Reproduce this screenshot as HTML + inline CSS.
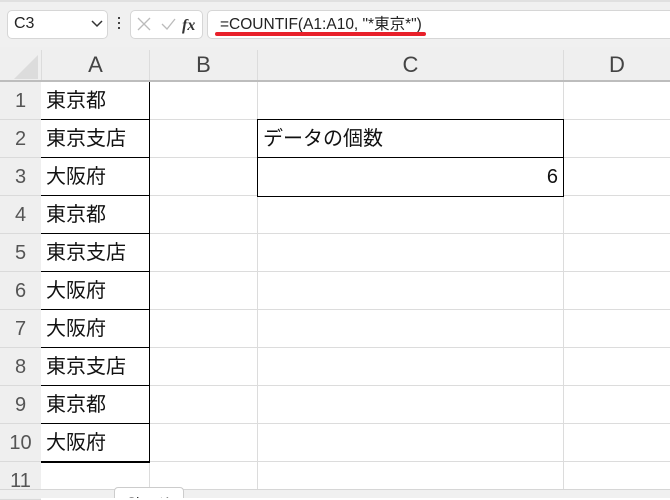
<!DOCTYPE html>
<html><head><meta charset="utf-8"><style>
*{margin:0;padding:0;box-sizing:border-box}
body{width:670px;height:498px;overflow:hidden;background:#fff;position:relative;font-family:"Liberation Sans","Noto Sans CJK JP",sans-serif}
.a{position:absolute}
.top{left:0;top:0;width:670px;height:47px;background:#f0f0f0;border-top:2px solid #e0e0e0}
.box{background:#fff;border:1px solid #d6d6d6;border-radius:5px}
.hdr{background:#efefef;color:#444;font-size:22px;text-align:center}
.rn{left:0;width:41px;height:38px;background:#efefef;color:#555;font-size:20px;text-align:center;line-height:38px;border-bottom:1px solid #dadada}
.vl{top:82px;width:1px;height:407px;background:#dcdcdc}
.hl{left:41px;width:629px;height:1px;background:#dcdcdc}
.t{font-size:20px;line-height:38px;color:#111;padding-left:5px}
</style></head><body>
<div class="a top"></div>
<div class="a box" style="left:7px;top:10px;width:101px;height:29px"></div>
<div class="a" style="left:14px;top:15px;font-size:16px;color:#222">C3</div>
<svg class="a" style="left:91px;top:20px" width="12" height="8"><path d="M1 1L6 6L11 1" stroke="#333" stroke-width="1.5" fill="none"/></svg>
<div class="a" style="left:118px;top:17px;width:2px;height:2px;background:#444;box-shadow:0 5px 0 #444,0 10px 0 #444"></div>
<div class="a box" style="left:130px;top:10px;width:73px;height:29px"></div>
<svg class="a" style="left:136px;top:16px" width="70" height="18"><path d="M2 2L14 14M14 2L2 14" stroke="#bbb" stroke-width="1.3"/><path d="M26 8L31 13L39 3" stroke="#bbb" stroke-width="1.3" fill="none"/><text x="46" y="14" font-family="Liberation Serif" font-style="italic" font-weight="bold" font-size="16" fill="#333">fx</text></svg>
<div class="a box" style="left:207px;top:10px;width:470px;height:29px;border-radius:5px 0 0 5px"></div>
<div class="a" style="left:220px;top:12px;font-size:15.5px;color:#222">=COUNTIF(A1:A10, "*東京*")</div>
<div class="a" style="left:215px;top:32px;width:211px;height:4px;background:#e8202a;border-radius:2px"></div>
<div class="a hdr" style="left:0;top:47px;width:670px;height:35px;border-bottom:2px solid #bdbdbd"></div>
<svg class="a" style="left:0;top:47px" width="41" height="35"><path d="M38 8L38 32L14 32Z" fill="#dcdcdc"/></svg>
<div class="a hdr" style="left:41px;top:50px;width:108px;line-height:30px;border-left:1px solid #dcdcdc">A</div>
<div class="a hdr" style="left:149px;top:50px;width:108px;line-height:30px;border-left:1px solid #dcdcdc">B</div>
<div class="a hdr" style="left:257px;top:50px;width:306px;line-height:30px;border-left:1px solid #dcdcdc">C</div>
<div class="a hdr" style="left:563px;top:50px;width:107px;line-height:30px;border-left:1px solid #dcdcdc">D</div>
<div class="a" style="left:0;top:82px;width:41px;height:407px;background:#efefef;border-right:1px solid #ccc"></div>
<div class="a rn" style="top:82px">1</div><div class="a rn" style="top:120px">2</div><div class="a rn" style="top:158px">3</div><div class="a rn" style="top:196px">4</div><div class="a rn" style="top:234px">5</div><div class="a rn" style="top:272px">6</div><div class="a rn" style="top:310px">7</div><div class="a rn" style="top:348px">8</div><div class="a rn" style="top:386px">9</div><div class="a rn" style="top:424px">10</div><div class="a rn" style="top:462px">11</div>
<div class="a vl" style="left:149px"></div><div class="a vl" style="left:257px"></div><div class="a vl" style="left:563px"></div>
<div class="a hl" style="top:119px"></div><div class="a hl" style="top:157px"></div><div class="a hl" style="top:195px"></div><div class="a hl" style="top:233px"></div><div class="a hl" style="top:271px"></div><div class="a hl" style="top:309px"></div><div class="a hl" style="top:347px"></div><div class="a hl" style="top:385px"></div><div class="a hl" style="top:423px"></div><div class="a hl" style="top:461px"></div>
<div class="a" style="left:41px;top:82px;width:109px;height:381px;border:1px solid #000;border-top:none;border-left:none;background:transparent"></div>
<div class="a" style="left:41px;top:82px;width:109px">
<div class="t" style="border-bottom:1px solid #000;height:38px">東京都</div>
<div class="t" style="border-bottom:1px solid #000;height:38px">東京支店</div>
<div class="t" style="border-bottom:1px solid #000;height:38px">大阪府</div>
<div class="t" style="border-bottom:1px solid #000;height:38px">東京都</div>
<div class="t" style="border-bottom:1px solid #000;height:38px">東京支店</div>
<div class="t" style="border-bottom:1px solid #000;height:38px">大阪府</div>
<div class="t" style="border-bottom:1px solid #000;height:38px">大阪府</div>
<div class="t" style="border-bottom:1px solid #000;height:38px">東京支店</div>
<div class="t" style="border-bottom:1px solid #000;height:38px">東京都</div>
<div class="t" style="border-bottom:1px solid #000;height:38px">大阪府</div>
</div>
<div class="a" style="left:257px;top:119px;width:307px;height:78px;border:1px solid #000;background:#fff">
<div class="t" style="height:38px;border-bottom:1px solid #000">データの個数</div>
<div class="t" style="height:38px;text-align:right;padding-right:5px">6</div>
</div>
<div class="a" style="left:0;top:489px;width:670px;height:9px;background:#f0f0f0;border-top:1px solid #d6d6d6"></div>
<div class="a" style="left:114px;top:487px;width:70px;height:11px;background:#fff;border:1px solid #ccc;border-bottom:none;border-radius:4px 4px 0 0;overflow:hidden"><div style="font-size:14px;color:#222;text-align:center;margin-top:6px">Sheet1</div></div>
</body></html>
